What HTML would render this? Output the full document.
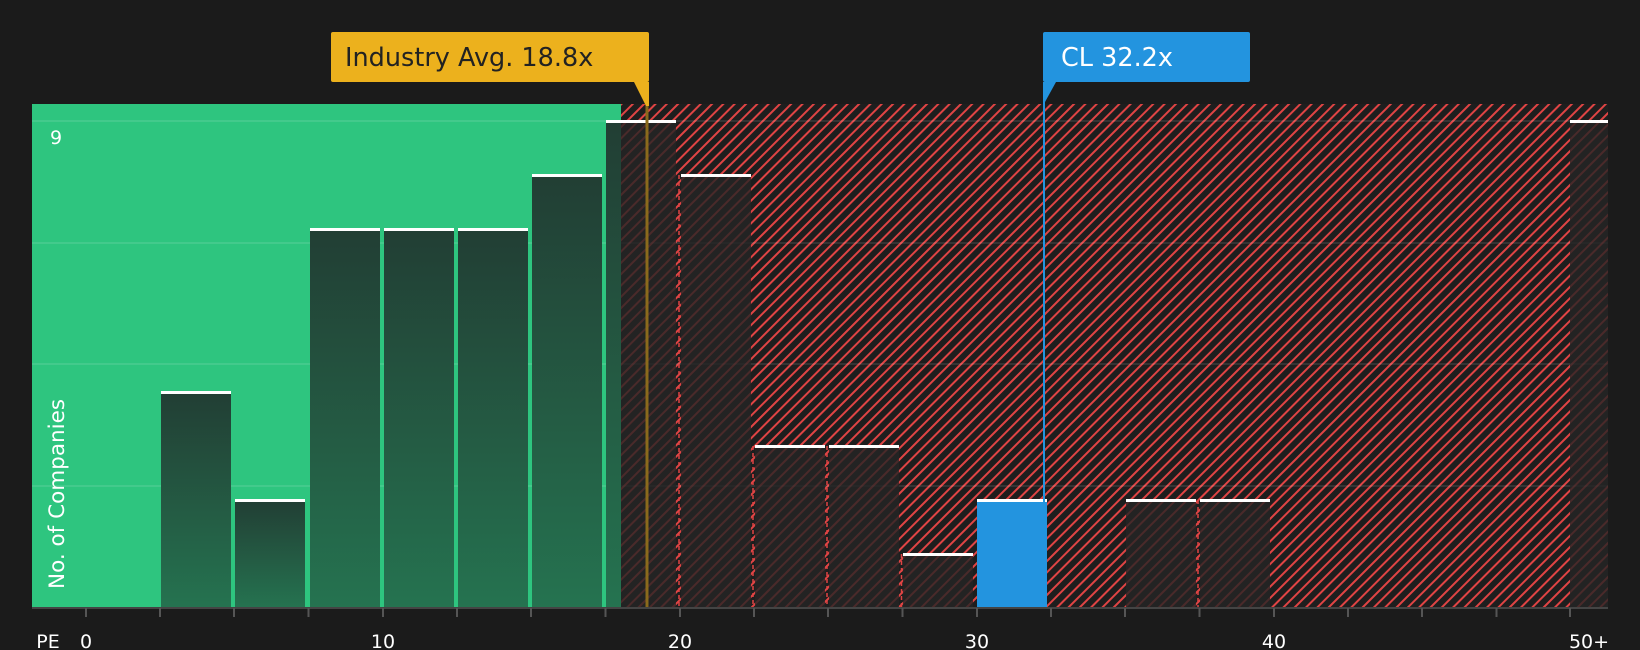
<!DOCTYPE html>
<html><head><meta charset="utf-8"><style>
html,body{margin:0;padding:0;background:#1b1b1b;}
svg{display:block;font-family:"DejaVu Sans","Liberation Sans",sans-serif;}
</style></head><body>
<svg width="1640" height="650" viewBox="0 0 1640 650" xmlns="http://www.w3.org/2000/svg">
<defs>
<pattern id="h" width="8" height="8" patternUnits="userSpaceOnUse" patternTransform="rotate(45)">
<rect width="8" height="8" fill="#1e1e1e"/>
<rect x="0" y="0" width="2" height="8" fill="#e04444"/>
</pattern>
<linearGradient id="g" x1="0" y1="0" x2="0" y2="1">
<stop offset="0" stop-color="#223e34"/><stop offset="1" stop-color="#257350"/>
</linearGradient>
</defs>
<rect width="1640" height="650" fill="#1b1b1b"/>
<rect x="32" y="104" width="589" height="504" fill="#2ec57f"/>
<rect x="621" y="104" width="987" height="504" fill="url(#h)"/>
<g stroke="#ffffff" stroke-opacity="0.1" stroke-width="2">
<line x1="32" y1="121" x2="1608" y2="121"/><line x1="32" y1="243" x2="1608" y2="243"/>
<line x1="32" y1="364" x2="1608" y2="364"/><line x1="32" y1="486" x2="1608" y2="486"/>
</g>
<g fill="url(#g)">
<rect x="161" y="392" width="70" height="216"/>
<rect x="235" y="500" width="70" height="108"/>
<rect x="310" y="229" width="70" height="379"/>
<rect x="384" y="229" width="70" height="379"/>
<rect x="458" y="229" width="70" height="379"/>
<rect x="532" y="175" width="70" height="433"/>
<rect x="606" y="121" width="15" height="487"/>
</g>
<g fill="#242424" fill-opacity="0.8">
<rect x="621" y="121" width="55" height="487"/>
<rect x="681" y="175" width="70" height="433"/>
<rect x="755" y="446" width="70" height="162"/>
<rect x="829" y="446" width="70" height="162"/>
<rect x="903" y="554" width="70" height="54"/>
<rect x="1126" y="500" width="70" height="108"/>
<rect x="1200" y="500" width="70" height="108"/>
<rect x="1570" y="121" width="38" height="487"/>
</g>
<g stroke="#e04444" stroke-width="1.5" stroke-dasharray="4,3">
<line x1="679" y1="175" x2="679" y2="608"/><line x1="753" y1="446" x2="753" y2="608"/>
<line x1="827" y1="446" x2="827" y2="608"/><line x1="901.5" y1="554" x2="901.5" y2="608"/>
<line x1="1198" y1="500" x2="1198" y2="608"/>
</g>
<rect x="977" y="500" width="70" height="108" fill="#2394df"/>
<g fill="#ffffff">
<rect x="161" y="391" width="70" height="3"/><rect x="235" y="499" width="70" height="3"/>
<rect x="310" y="228" width="70" height="3"/><rect x="384" y="228" width="70" height="3"/>
<rect x="458" y="228" width="70" height="3"/><rect x="532" y="174" width="70" height="3"/>
<rect x="606" y="120" width="70" height="3"/><rect x="681" y="174" width="70" height="3"/>
<rect x="755" y="445" width="70" height="3"/><rect x="829" y="445" width="70" height="3"/>
<rect x="903" y="553" width="70" height="3"/><rect x="977" y="499" width="70" height="3"/>
<rect x="1126" y="499" width="70" height="3"/><rect x="1200" y="499" width="70" height="3"/>
<rect x="1570" y="120" width="38" height="3"/>
</g>
<line x1="647" y1="82" x2="647" y2="608" stroke="#8a6a1c" stroke-width="3"/>
<line x1="1044" y1="82" x2="1044" y2="608" stroke="#2394df" stroke-width="2"/>
<rect x="331" y="32" width="318" height="50" rx="2" fill="#ecb11d"/>
<polygon points="634,82 649,82 649,106 646,106" fill="#ecb11d"/>
<text x="345" y="66" font-size="25.5" fill="#222">Industry Avg. 18.8x</text>
<rect x="1043" y="32" width="207" height="50" rx="2" fill="#2394df"/>
<polygon points="1043,82 1056,82 1045,102 1043,102" fill="#2394df"/>
<text x="1061" y="66" font-size="25.5" fill="#fff">CL 32.2x</text>
<line x1="32" y1="608" x2="1608" y2="608" stroke="#444" stroke-width="2"/>
<g stroke="#555" stroke-width="2">
<line x1="86" y1="608" x2="86" y2="617"/><line x1="160" y1="608" x2="160" y2="617"/><line x1="234" y1="608" x2="234" y2="617"/><line x1="308.5" y1="608" x2="308.5" y2="617"/><line x1="383" y1="608" x2="383" y2="617"/><line x1="457" y1="608" x2="457" y2="617"/><line x1="531" y1="608" x2="531" y2="617"/><line x1="605.5" y1="608" x2="605.5" y2="617"/><line x1="680" y1="608" x2="680" y2="617"/><line x1="754" y1="608" x2="754" y2="617"/><line x1="828" y1="608" x2="828" y2="617"/><line x1="902.5" y1="608" x2="902.5" y2="617"/><line x1="977" y1="608" x2="977" y2="617"/><line x1="1051" y1="608" x2="1051" y2="617"/><line x1="1125" y1="608" x2="1125" y2="617"/><line x1="1199.5" y1="608" x2="1199.5" y2="617"/><line x1="1274" y1="608" x2="1274" y2="617"/><line x1="1348" y1="608" x2="1348" y2="617"/><line x1="1422" y1="608" x2="1422" y2="617"/><line x1="1496.5" y1="608" x2="1496.5" y2="617"/><line x1="1570" y1="608" x2="1570" y2="617"/>
</g>
<g font-size="19" fill="#fff" text-anchor="middle">
<text x="48" y="648">PE</text>
<text x="86" y="648">0</text><text x="383" y="648">10</text><text x="680" y="648">20</text>
<text x="977" y="648">30</text><text x="1274" y="648">40</text><text x="1589" y="648">50+</text>
</g>
<text x="56" y="144" font-size="19" fill="#fff" text-anchor="middle">9</text>
<text transform="translate(64,494) rotate(-90)" font-size="21.5" fill="#fff" text-anchor="middle">No. of Companies</text>
</svg>
</body></html>
